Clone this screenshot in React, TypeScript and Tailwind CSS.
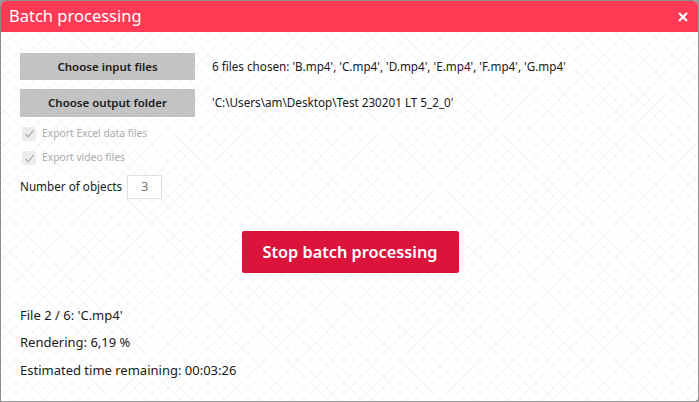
import React from "react";

const Check = () => (
  <span className="flex h-[14px] w-[14px] items-center justify-center rounded-[2px] bg-[#ececec]">
    <svg width="11" height="11" viewBox="0 0 12 12" fill="none">
      <path d="M1.5 6.5 L4.5 9.5 L10.5 2.5" stroke="#b5b5b5" strokeWidth="1.6" />
    </svg>
  </span>
);

const App = () => {
  return (
    <div className="h-[402px] w-[699px] bg-[#9a9a9a] font-['Noto_Sans','Open_Sans',sans-serif]">
      <div className="flex h-[401px] w-[698px] flex-col overflow-hidden rounded-t-[6px] rounded-br-[4px] border-l border-t border-[#8c8c8c] bg-white">
        {/* TITLE BAR */}
        <div className="flex h-[31px] shrink-0 items-center justify-between bg-[#ff3a55] pl-[8px] pr-[10px] text-white">
          <span className="text-[16.5px] leading-none">Batch processing</span>
          <svg width="10" height="10" viewBox="0 0 10 10">
            <path d="M1 1 L9 9 M9 1 L1 9" stroke="white" strokeWidth="2.2" />
          </svg>
        </div>

        {/* BODY */}
        <div className="flex flex-1 flex-col bg-[repeating-linear-gradient(45deg,transparent_0px,transparent_7px,#f6f7f9_7px,#f6f7f9_8px),repeating-linear-gradient(-45deg,transparent_0px,transparent_7px,#f6f7f9_7px,#f6f7f9_8px)] px-[19px] pt-[21px] text-[#1a1a1a]">
          <div className="flex items-center gap-[17px]">
            <button className="h-[27px] w-[175px] bg-[#c3c3c3] text-[11.5px] font-semibold">
              Choose input files
            </button>
            <span className="text-[11.7px]">
              6 files chosen: 'B.mp4', 'C.mp4', 'D.mp4', 'E.mp4', 'F.mp4', 'G.mp4'
            </span>
          </div>
          <div className="mt-[9px] flex items-center gap-[17px]">
            <button className="h-[28px] w-[175px] bg-[#c3c3c3] text-[11.5px] font-semibold">
              Choose output folder
            </button>
            <span className="text-[11.7px]">'C:\Users\am\Desktop\Test 230201 LT 5_2_0'</span>
          </div>

          <div className="mt-[9px] flex items-center gap-[6px] pl-[2px] text-[10.3px] text-[#ababab]">
            <Check />
            <span>Export Excel data files</span>
          </div>
          <div className="mt-[9px] flex items-center gap-[6px] pl-[2px] text-[10.3px] text-[#ababab]">
            <Check />
            <span>Export video files</span>
          </div>

          <div className="mt-[9px] flex items-center gap-[5px] text-[11.7px]">
            <span>Number of objects</span>
            <span className="flex h-[24px] w-[35px] items-center justify-center border border-[#e0e0e0] bg-white text-[13px] text-[#777]">
              3
            </span>
          </div>

          <div className="mt-[32px] flex justify-center pl-[1px]">
            <button className="h-[42px] w-[217px] rounded-[2px] bg-[#dc143c] text-[16.3px] font-semibold text-white">
              Stop batch processing
            </button>
          </div>

          <div className="mt-[33px] flex flex-col gap-[8.5px] text-[13px] leading-[19px]">
            <span>File 2 / 6: 'C.mp4'</span>
            <span>Rendering: 6,19 %</span>
            <span>Estimated time remaining: 00:03:26</span>
          </div>
        </div>
      </div>
    </div>
  );
};

export default App;
